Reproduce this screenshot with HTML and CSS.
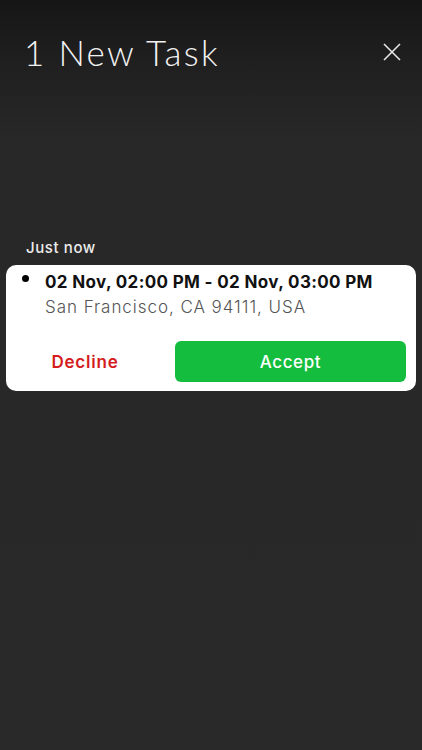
FILE: index.html
```html
<!DOCTYPE html>
<html lang="en">
<head>
<meta charset="UTF-8" />
<meta name="viewport" content="width=device-width, initial-scale=1" />
<title>New Task</title>
<link rel="stylesheet" href="styles.css">
</head>
<body>

<div class="screen">
  <header class="top-bar">
    <h1 class="title">1 New Task</h1>
    <button class="close-btn" aria-label="Close">
      <svg width="18" height="18" viewBox="0 0 18 18">
        <path d="M1 1 L17 17 M17 1 L1 17" stroke="#e6e6e6" stroke-width="1.6" fill="none" />
      </svg>
    </button>
  </header>

  <div class="task-list">
    <div class="time-label">Just now</div>
    <div class="task-card">
      <div class="task-info">
        <span class="dot"></span>
        <div>
          <div class="task-time">02 Nov, 02:00 PM - 02 Nov, 03:00 PM</div>
          <div class="task-address">San Francisco, CA 94111, USA</div>
        </div>
      </div>
      <div class="task-actions">
        <button class="decline-btn">Decline</button>
        <button class="accept-btn">Accept</button>
      </div>
    </div>
  </div>
</div>

</body>
</html>
```

FILE: styles.css
```css
body {
  margin: 0;
  font-family: "Inter", "Open Sans", sans-serif;
  background: #282828;
  width: 422px;
  height: 750px;
  overflow: hidden;
}
.screen {
  height: 750px;
  background: linear-gradient(to bottom, #161616 0px, #1f1f1f 60px, #282828 140px, #292929 100%);
}
.top-bar {
  display: flex;
  align-items: center;
  justify-content: space-between;
  padding: 28px 21px 0 24px;
  height: 48px;
}
.title {
  margin: 0;
  font-family: "Lato", sans-serif;
  font-weight: 300;
  font-size: 35px;
  letter-spacing: 2.3px;
  color: #f2f2f2;
}
.close-btn {
  background: none;
  border: none;
  padding: 0;
  width: 18px;
  height: 18px;
  cursor: pointer;
}
.task-list {
  padding: 162px 6px 0 6px;
}
.time-label {
  color: #ececec;
  font-size: 15px;
  font-weight: 500;
  letter-spacing: 0.6px;
  padding-left: 20px;
  margin-bottom: 8px;
}
.task-card {
  background: #fff;
  border-radius: 10px;
  padding: 5px 10px 9px 16px;
}
.task-info {
  display: flex;
  gap: 16px;
}
.dot {
  width: 7px;
  height: 7px;
  border-radius: 50%;
  background: #000;
  margin-top: 5px;
  flex-shrink: 0;
}
.task-time {
  font-size: 17px;
  font-weight: 700;
  letter-spacing: 0.35px;
  color: #111;
  line-height: 24px;
}
.task-address {
  font-size: 17px;
  font-weight: 300;
  letter-spacing: 0.95px;
  color: #555;
  line-height: 24px;
  margin-top: 1px;
}
.task-actions {
  display: flex;
  align-items: center;
  gap: 25px;
  margin-top: 22px;
  margin-left: -2px;
}
.decline-btn {
  width: 130px;
  padding: 0;
  background: none;
  border: none;
  color: #d41c1c;
  font-family: inherit;
  font-size: 17px;
  font-weight: 600;
  letter-spacing: 0.8px;
  cursor: pointer;
}
.accept-btn {
  flex: 1;
  height: 41px;
  background: #14bd3d;
  border: none;
  border-radius: 6px;
  color: #fff;
  font-family: inherit;
  font-size: 17px;
  font-weight: 500;
  letter-spacing: 0.6px;
  cursor: pointer;
}
```
